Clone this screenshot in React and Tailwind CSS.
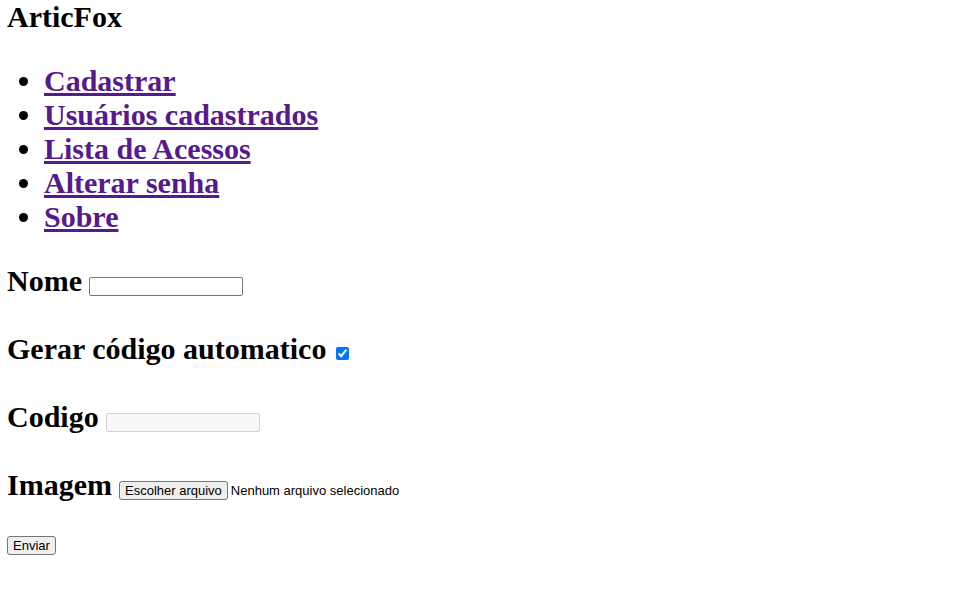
import { useRef, useState } from "react";

const links = ["Cadastrar", "Usuários cadastrados", "Lista de Acessos", "Alterar senha", "Sobre"];

const fieldClass =
  "h-[19px] w-[154px] rounded-[2px] border border-[#767676] bg-white px-1 font-['Liberation_Sans',Arial,sans-serif] text-[13px] font-normal disabled:border-[#d1d1d1] disabled:bg-[#f8f8f8]";
const buttonClass =
  "h-[19px] rounded-[3px] border border-[#767676] bg-[#efefef] px-[5px] font-['Liberation_Sans',Arial,sans-serif] text-[13px] leading-[17px] font-normal text-black";
const rowClass = "flex items-end gap-[7px]";

export default function App() {
  const [auto, setAuto] = useState(true);
  const [fileName, setFileName] = useState("Nenhum arquivo selecionado");
  const fileRef = useRef(null);

  return (
    <main className="flex flex-col gap-[30px] bg-white px-[7px] font-['Liberation_Serif','Times_New_Roman',serif] text-[30px] leading-[34px] font-bold text-black">
      <h1>ArticFox</h1>
      <ul className="list-disc pl-[37px]">
        {links.map((link) => (
          <li key={link}>
            <a href="#" className="text-[#551a8b] underline">{link}</a>
          </li>
        ))}
      </ul>
      <form className="flex flex-col items-start gap-[34px]" onSubmit={(e) => e.preventDefault()}>
        <div className={rowClass}>
          <label htmlFor="nome">Nome</label>
          <div className="flex pb-0.5">
            <input id="nome" type="text" className={fieldClass} />
          </div>
        </div>
        <div className="flex items-center gap-2.5">
          <label htmlFor="auto">Gerar código automatico</label>
          <input
            id="auto"
            type="checkbox"
            checked={auto}
            onChange={(e) => setAuto(e.target.checked)}
            className="mt-2 size-[13px]"
          />
        </div>
        <div className={rowClass}>
          <label htmlFor="codigo">Codigo</label>
          <div className="flex pb-0.5">
            <input id="codigo" type="text" disabled={auto} className={fieldClass} />
          </div>
        </div>
        <div className={rowClass}>
          <label htmlFor="imagem">Imagem</label>
          <div className="flex items-center gap-[3px] pb-0.5">
            <button id="imagem" type="button" className={buttonClass} onClick={() => fileRef.current.click()}>
              Escolher arquivo
            </button>
            <span className="font-['Liberation_Sans',Arial,sans-serif] text-[13px] leading-[17px] font-normal">
              {fileName}
            </span>
          </div>
          <input
            ref={fileRef}
            type="file"
            aria-label="Imagem"
            className="hidden"
            onChange={(e) => setFileName(e.target.files[0]?.name ?? "Nenhum arquivo selecionado")}
          />
        </div>
        <button type="submit" className={buttonClass}>Enviar</button>
      </form>
    </main>
  );
}
